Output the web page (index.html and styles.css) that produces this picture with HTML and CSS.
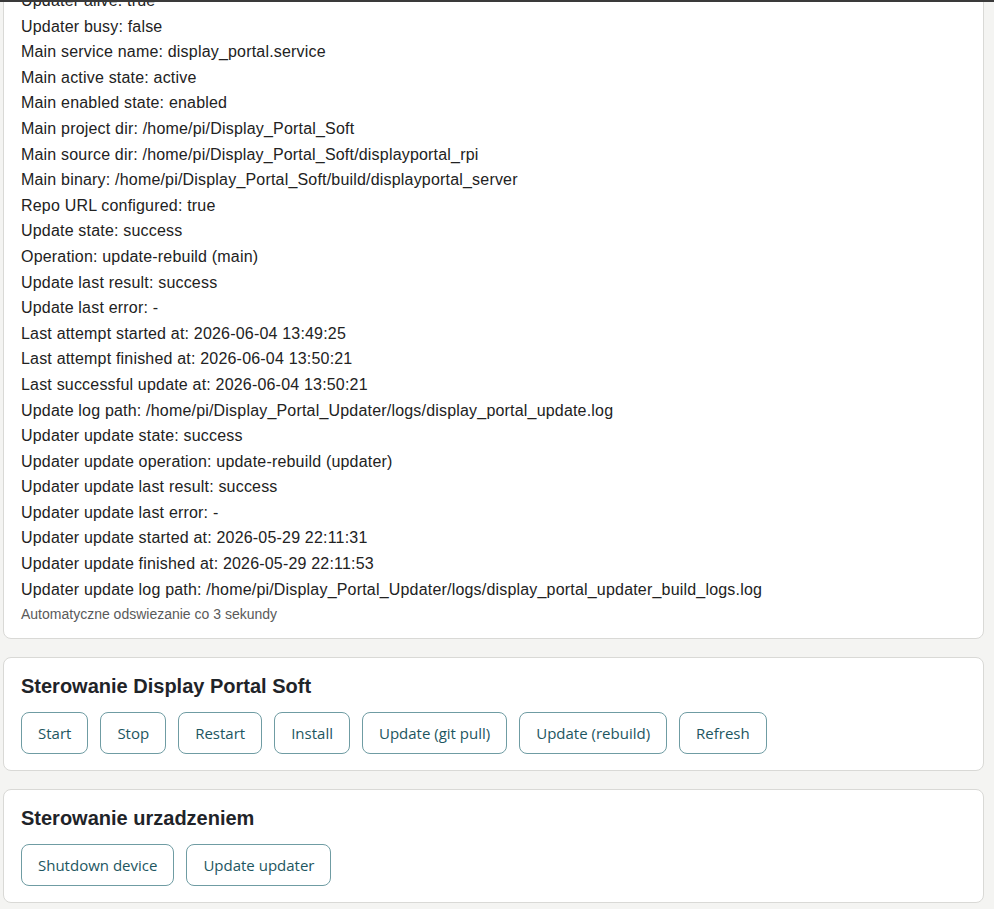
FILE: index.html
```html
<!DOCTYPE html>
<html lang="pl">
<head>
<meta charset="utf-8">
<title>Display Portal Updater</title>
<link rel="stylesheet" href="styles.css">
</head>
<body>
<div class="topbar"></div>
<main class="page">
  <section class="card status">
    <div class="line">Updater alive: true</div>
    <div class="line">Updater busy: false</div>
    <div class="line">Main service name: display_portal.service</div>
    <div class="line">Main active state: active</div>
    <div class="line">Main enabled state: enabled</div>
    <div class="line">Main project dir: /home/pi/Display_Portal_Soft</div>
    <div class="line">Main source dir: /home/pi/Display_Portal_Soft/displayportal_rpi</div>
    <div class="line">Main binary: /home/pi/Display_Portal_Soft/build/displayportal_server</div>
    <div class="line">Repo URL configured: true</div>
    <div class="line">Update state: success</div>
    <div class="line">Operation: update-rebuild (main)</div>
    <div class="line">Update last result: success</div>
    <div class="line">Update last error: -</div>
    <div class="line">Last attempt started at: 2026-06-04 13:49:25</div>
    <div class="line">Last attempt finished at: 2026-06-04 13:50:21</div>
    <div class="line">Last successful update at: 2026-06-04 13:50:21</div>
    <div class="line">Update log path: /home/pi/Display_Portal_Updater/logs/display_portal_update.log</div>
    <div class="line">Updater update state: success</div>
    <div class="line">Updater update operation: update-rebuild (updater)</div>
    <div class="line">Updater update last result: success</div>
    <div class="line">Updater update last error: -</div>
    <div class="line">Updater update started at: 2026-05-29 22:11:31</div>
    <div class="line">Updater update finished at: 2026-05-29 22:11:53</div>
    <div class="line">Updater update log path: /home/pi/Display_Portal_Updater/logs/display_portal_updater_build_logs.log</div>
    <div class="note">Automatyczne odswiezanie co 3 sekundy</div>
  </section>

  <section class="card">
    <h2 class="card-title">Sterowanie Display Portal Soft</h2>
    <div class="actions">
      <button class="btn">Start</button>
      <button class="btn">Stop</button>
      <button class="btn">Restart</button>
      <button class="btn">Install</button>
      <button class="btn">Update (git pull)</button>
      <button class="btn">Update (rebuild)</button>
      <button class="btn">Refresh</button>
    </div>
  </section>

  <section class="card">
    <h2 class="card-title">Sterowanie urzadzeniem</h2>
    <div class="actions">
      <button class="btn">Shutdown device</button>
      <button class="btn">Update updater</button>
    </div>
  </section>
</main>
</body>
</html>
```

FILE: styles.css
```css
html, body {
  margin: 0;
  padding: 0;
}

body {
  background: #f4f4f2;
  font-family: "Liberation Sans", Arial, sans-serif;
  font-size: 16px;
  line-height: 1.6;
  color: #222;
  overflow: hidden;
}

.topbar {
  position: fixed;
  top: 0;
  left: 0;
  right: 0;
  height: 2px;
  background: #3a3a3a;
  z-index: 10;
}

.page {
  display: flex;
  flex-direction: column;
  gap: 18px;
  margin: -29px 10px 0 3px;
}

.card {
  background: #fff;
  border: 1px solid #d9d9d6;
  border-radius: 8px;
  padding: 16px 16px 16px 17px;
}

.status .line {
  white-space: nowrap;
  letter-spacing: 0.19px;
}

.note {
  margin-top: 4px;
  font-size: 14px;
  line-height: 16px;
  color: #5a5a5a;
}

.card-title {
  margin: 0 0 14px;
  font-size: 20px;
  line-height: 24px;
  font-weight: bold;
  color: #1f2429;
}

.actions {
  display: flex;
  flex-wrap: wrap;
  gap: 12px;
}

.btn {
  height: 42px;
  padding: 0 16px;
  background: #fff;
  border: 1px solid #6f9ca3;
  border-radius: 8px;
  color: #1d5661;
  font-family: "Open Sans", "Noto Sans", sans-serif;
  font-size: 15px;
  cursor: pointer;
}
```
